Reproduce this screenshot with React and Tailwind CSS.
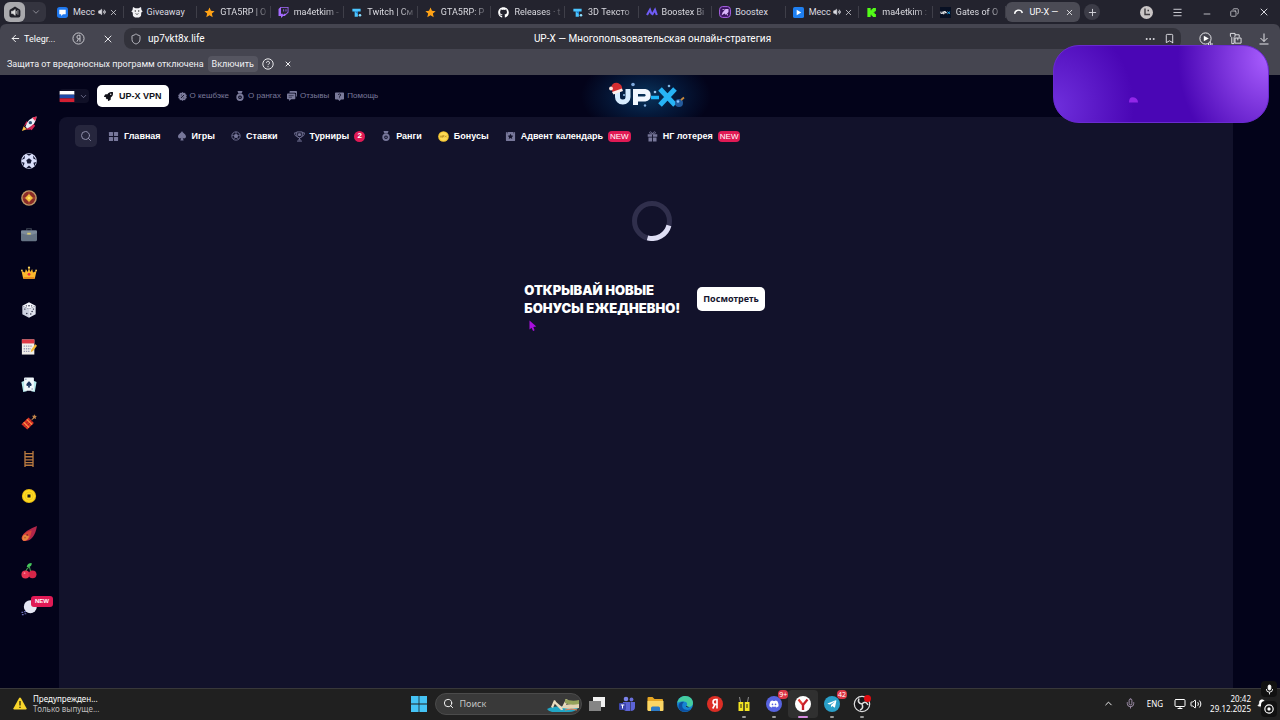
import React from 'react';
import { ArrowLeft, Bell, Bookmark, ChevronDown, ChevronUp, Copy, Menu, Mic, Minus, Monitor, MoreHorizontal, Plus, Search, Shield, Volume2, X } from 'lucide-react';
import { FaDiscord, FaGithub, FaRocket, FaTwitch, FaTelegramPlane } from 'react-icons/fa';

const StarIcon = () => (
  <svg viewBox="0 0 12 12" className="size-[11px]">
    <path d="M6 .5 7.6 4.2l4 .3-3 2.7.9 4L6 9.1l-3.5 2.1.9-4-3-2.7 4-.3z" fill="#ffa216" />
  </svg>
);

const TeletypeIcon = () => (
  <svg viewBox="0 0 12 12" className="size-[11px]">
    <path d="M1.500 2h9v3H7.500v5.500H4V5H1.500z" fill="#4cc5ff" />
    <path d="M4 5h3.500v3z" fill="#1879c9" />
    <circle cx="9.8" cy="9" r="1.4" fill="#8fe0ff" />
  </svg>
);

const ChatIcon = () => (
  <svg viewBox="0 0 12 12" className="size-[11px]">
    <rect width="12" height="12" rx="3" fill="#1f78ee" />
    <path d="M2.500 3h7v5H6.5L4.5 9.8V8h-2z" fill="#fff" />
  </svg>
);

const PlayIcon = () => (
  <svg viewBox="0 0 12 12" className="size-[11px]">
    <rect width="12" height="12" rx="2" fill="#1f80f2" />
    <path d="M4 3l5 3-5 3z" fill="#fff" />
  </svg>
);

const GiveawayIcon = () => (
  <svg viewBox="0 0 12 12" className="size-[12px]">
    <path d="M2 1l2.5 1.2h3L10 1l.5 3 1.2 1.5-1.4 1L10 10l-2 1.5H4L2 10l-.3-3.4L.3 5.5 1.5 4z" fill="#f1f1f4" />
    <circle cx="4.3" cy="5" r=".7" fill="#333" />
    <circle cx="7.7" cy="5" r=".7" fill="#333" />
    <path d="M4.5 7.5L6 8.5l1.5-1" stroke="#333" strokeWidth=".7" fill="none" />
  </svg>
);

const WaveIcon = () => (
  <svg viewBox="0 0 12 12" className="size-[12px]">
    <path d="M1 9L4 3.800 5.600 8M6 9L9 3.800 10.800 9" stroke="#6f5cf5" strokeWidth="2.100" fill="none" />
  </svg>
);

const BoostexIcon = () => (
  <svg viewBox="0 0 12 12" className="size-[12px]">
    <rect x=".6" y=".6" width="10.8" height="10.8" rx="3" fill="#3b1560" stroke="#ad63ea" />
    <path d="M2.500 9.500l1-3 3-3.500H9.500v3L7 9 5.500 7.500z" fill="#d9b5fa" />
    <path d="M3.500 3.500h2M8.500 8v1.500" stroke="#d9b5fa" strokeWidth=".8" />
  </svg>
);

const KickIcon = () => (
  <svg viewBox="0 0 12 12" className="size-[11px]">
    <path d="M1.500 1h3.600v2.500h1V2.200h1.200V1h3.500v3.500H9.500v1.300H8.300v.6h1.200v1.300h1.300V11H7.300V9.800H6.100V8.500h-1V11H1.500z" fill="#53fc18" />
  </svg>
);

const GatesIcon = () => (
  <svg viewBox="0 0 12 12" className="size-[11px]">
    <rect width="12" height="12" fill="#081023" />
    <path d="M1 5v2h2V5M4 8V5h2v1.5H4M6.5 6.2h1" stroke="#fff" fill="none" />
    <path d="M8 5l3 2.5M11 5L8 7.5" stroke="#23b2ff" />
  </svg>
);

const LoadingIcon = () => (
  <svg viewBox="0 0 12 12" className="size-[11px]">
    <path d="M1.800 7.500A4.300 4.300 0 0 1 10.200 6.500" stroke="#fff" strokeWidth="1.5" fill="none" />
  </svg>
);

const tabs = [
  { title: 'Месс', icon: <ChatIcon />, sound: true, close: true },
  { title: 'Giveaway', icon: <GiveawayIcon /> },
  { title: 'GTA5RP | О', icon: <StarIcon />, fade: true },
  { title: 'ma4etkim -', icon: <FaTwitch size={11} color="#a56bff" />, fade: true },
  { title: 'Twitch | См', icon: <TeletypeIcon />, fade: true },
  { title: 'GTA5RP: Р', icon: <StarIcon />, fade: true },
  { title: 'Releases · t', icon: <FaGithub size={11} color="#fff" />, fade: true },
  { title: '3D Тексто', icon: <TeletypeIcon />, fade: true },
  { title: 'Boostex Bi', icon: <WaveIcon />, fade: true },
  { title: 'Boostex', icon: <BoostexIcon /> },
  { title: 'Месс', icon: <PlayIcon />, sound: true, close: true },
  { title: 'ma4etkim :', icon: <KickIcon />, fade: true },
  { title: 'Gates of O', icon: <GatesIcon />, fade: true },
  { title: 'UP-X —', icon: <LoadingIcon />, close: true, active: true },
];

const Tab = ({ title, icon, sound, close, fade, active }) => (
  <div
    className={`flex h-5 min-w-0 items-center pl-[7px] ${close ? 'pr-[6px]' : 'pr-px'} ${
      active ? 'rounded-md bg-[#4b4b55] text-white' : 'bg-[linear-gradient(#3f3f49,#3f3f49)] bg-[length:1px_12px] bg-right bg-no-repeat text-[#dcdce2]'
    }`}
  >
    <span className="mr-1 w-3 shrink-0">{icon}</span>
    <span
      className={`grow whitespace-nowrap text-[9px] leading-4 ${
        fade ? '[mask-image:linear-gradient(to_right,black_65%,transparent)]' : ''
      }`}
    >
      {title}
    </span>
    {sound && <Volume2 size={8} fill="currentColor" className="mr-[3px] shrink-0" />}
    {close && (
      <button type="button" aria-label="Закрыть вкладку" className="shrink-0">
        <X size={9} />
      </button>
    )}
  </div>
);

const TabBar = () => (
  <div className="flex h-6 items-center bg-[#23232e] text-[#d8d8de]">
    <div className="ml-1 flex h-5 w-[42px] shrink-0 items-center rounded-md bg-[#34343f]">
      <button type="button" aria-label="Звук" className="flex h-5 w-[21px] items-center justify-center rounded-md bg-[#a9a9ad]">
        <svg viewBox="0 0 12 12" className="size-3">
          <path d="M2 3l4-2.4L10 3a2 2 0 0 1 1.4 2v4.5a2 2 0 0 1-2 2h-7a2 2 0 0 1-2-2V5A2 2 0 0 1 2 3z" fill="#202028" />
          <path d="M2.5 5.2H4l2.2-1.8v6L4 7.6H2.5zM7.4 5v2.8M8.9 4v4.8" fill="#ddd" stroke="#ddd" strokeWidth=".6" />
        </svg>
      </button>
      <button type="button" aria-label="Список вкладок" className="flex flex-1 justify-center">
        <ChevronDown size={10} className="text-[#9a9aa4]" />
      </button>
    </div>
    <div className="ml-1 grid min-w-0 flex-1 grid-cols-14">
      {tabs.map((tab, index) => (
        <Tab key={index} {...tab} />
      ))}
    </div>
    <div className="flex w-[200px] shrink-0 items-center pl-1">
      <button type="button" aria-label="Новая вкладка" className="flex size-4 items-center justify-center rounded-full bg-[#3c3c47]">
        <Plus size={11} />
      </button>
      <div className="flex flex-1 items-center justify-between pl-10 pr-[10px]">
        <button type="button" aria-label="Профиль" className="flex size-[13px] items-center justify-center rounded-full bg-[#c9c5c6]">
          <svg viewBox="0 0 12 12" className="size-3">
            <path d="M4 2.500v6h5M6.500 4.500h1.500" stroke="#3d3a3f" strokeWidth="1.4" fill="none" />
          </svg>
        </button>
        <button type="button" aria-label="Меню"><Menu size={11} /></button>
        <button type="button" aria-label="Свернуть" className="pt-1"><Minus size={10} /></button>
        <button type="button" aria-label="Окно"><Copy size={9} className="-scale-x-100" /></button>
        <button type="button" aria-label="Закрыть"><X size={12} /></button>
      </div>
    </div>
  </div>
);

const AddressBar = () => (
  <div className="bg-[#23232e]">
    <div className="flex h-[29px] items-start rounded-t-md bg-[#454550] pt-1 text-[#e6e6ea]">
      <div className="flex h-[21px] w-[124px] shrink-0 items-center pl-[10px]">
        <button type="button" className="flex items-center gap-[3px] text-[9px] leading-4 text-white">
          <ArrowLeft size={11} />
          Telegr...
        </button>
        <button type="button" aria-label="Яндекс" className="ml-[17px]">
          <svg viewBox="0 0 14 14" className="size-[13px]" fill="none" stroke="#d0d0d6">
            <circle cx="7" cy="7" r="6" />
            <path d="M8.6 10.5v-7H7.2a1.8 1.8 0 0 0 0 3.8h1.4M7 7.4l-1.7 3.1" />
          </svg>
        </button>
        <button type="button" aria-label="Остановить" className="ml-[17px]">
          <X size={12} />
        </button>
      </div>
      <div className="relative flex h-[21px] min-w-0 flex-1 items-center rounded-lg bg-[#32323b] px-[6px]">
        <Shield size={12} className="shrink-0 text-[#b8b8c0]" />
        <input
          aria-label="Адрес"
          defaultValue="up7vkt8x.life"
          className="ml-[6px] w-[100px] bg-transparent text-[10px] leading-4 text-white outline-none"
        />
        <div className="absolute inset-x-0 top-0 mx-auto w-fit text-[10px] leading-[21px] text-white">
          UP-X — Многопользовательская онлайн-стратегия
        </div>
        <button type="button" aria-label="Ещё" className="ml-auto">
          <MoreHorizontal size={12} />
        </button>
        <button type="button" aria-label="Закладка" className="ml-2">
          <Bookmark size={11} />
        </button>
      </div>
      <div className="flex h-[21px] w-[99px] shrink-0 items-center justify-between pl-[18px] pr-[10px]">
        <button type="button" aria-label="Видео">
          <svg viewBox="0 0 14 14" className="size-[14px]">
            <circle cx="6.5" cy="6.5" r="5.6" fill="none" stroke="#e6e6ea" />
            <path d="M4.8 3.7l5 2.8-5 2.8z" fill="#fff" />
            <path d="M9.5 13v-2M11.3 13v-3.4M13 13v-2" stroke="#e6e6ea" />
          </svg>
        </button>
        <button type="button" aria-label="Расширения">
          <svg viewBox="0 0 14 14" className="size-[13px]" fill="none" stroke="#e6e6ea">
            <path d="M1.500 1.500h5v3L5.500 6v6.500H3V6L1.500 4.500zM6.500 3H11v3M6.500 6.500H13V12H6.500zM9.500 6.500v2.500" />
          </svg>
        </button>
        <button type="button" aria-label="Загрузки">
          <svg viewBox="0 0 12 12" className="size-3" fill="none" stroke="#e6e6ea">
            <path d="M6 .5v8M2.500 5L6 8.500 9.500 5M1.500 11h9" />
          </svg>
        </button>
      </div>
    </div>
  </div>
);

const WarningBar = () => (
  <div className="flex h-[22px] items-center bg-[#454550] pl-[7px] text-[9px] leading-4 text-[#f0f0f3]">
    <span>Защита от вредоносных программ отключена</span>
    <button type="button" className="ml-1 h-4 rounded-sm bg-[#555560] px-1">Включить</button>
    <button type="button" aria-label="Справка" className="ml-1">
      <svg viewBox="0 0 12 12" className="size-3" fill="none" stroke="#e8e8ec">
        <circle cx="6" cy="6" r="5.2" />
        <path d="M4.5 4.8a1.5 1.5 0 1 1 2.2 1.3q-.7.3-.7 1M6 8.2v1" />
      </svg>
    </button>
    <button type="button" aria-label="Скрыть" className="ml-[10px]"><X size={8} strokeWidth={3} /></button>
  </div>
);

const GearIcon = () => (
  <svg viewBox="0 0 12 12" className="size-[9px]">
    <path d="M6 0l1.5 1.3 2-.3.6 1.9 1.7 1L11 6l.8 2-1.7 1-.6 2-2-.3L6 12l-1.5-1.3-2 .3L2 9 .2 8 1 6 .2 4 2 3l.5-2 2 .3z" fill="currentColor" />
    <path d="M4 8l4-4M4 4h.9M7.3 8h.9" stroke="#05051c" strokeWidth="1.1" />
  </svg>
);

const MedalIcon = () => (
  <svg viewBox="0 0 12 12" className="size-[10px]">
    <path d="M3 0h6L8 3H4z" fill="currentColor" />
    <circle cx="6" cy="7.5" r="3.3" stroke="currentColor" strokeWidth="2.2" fill="none" />
    <circle cx="6" cy="7.5" r="1" fill="currentColor" />
  </svg>
);

const ReviewsIcon = () => (
  <svg viewBox="0 0 12 12" className="size-[10px]">
    <path d="M4 0h7a1 1 0 0 1 1 1v5a1 1 0 0 1-1 1V3.500a1.500 1.500 0 0 0-1.500-1.500H3V1a1 1 0 0 1 1-1z" fill="currentColor" />
    <path d="M1 3h8a1 1 0 0 1 1 1v5a1 1 0 0 1-1 1H5l-2.500 2V10H1a1 1 0 0 1-1-1V4a1 1 0 0 1 1-1z" fill="currentColor" />
    <path d="M2 5.500h6M2 7.500h4" stroke="#25253f" strokeWidth=".8" />
  </svg>
);

const HelpIcon = () => (
  <svg viewBox="0 0 12 12" className="size-[9px]">
    <path d="M1 .5h10a1 1 0 0 1 1 1V9a1 1 0 0 1-1 1H8l-2 2-2-2H1a1 1 0 0 1-1-1V1.500a1 1 0 0 1 1-1z" fill="currentColor" />
    <path d="M4.500 4a1.500 1.500 0 1 1 1.500 1.500v.8M6 7.200v1" stroke="#05051c" fill="none" />
  </svg>
);

const headerLinks = [
  { label: 'О кешбэке', icon: <GearIcon /> },
  { label: 'О рангах', icon: <MedalIcon /> },
  { label: 'Отзывы', icon: <ReviewsIcon /> },
  { label: 'Помощь', icon: <HelpIcon /> },
];

const Logo = () => (
  <a href="#home" aria-label="UP-X" className="block">
    <svg viewBox="0 0 80 32" className="h-8 w-20">
      {/* letters are plain bars, hat and bauble sit on the corners */}
      <g fill="none" strokeWidth="5">
        <path d="M11.500 9.500v7.500a5 5 0 0 0 5 5h.5a5 5 0 0 0 5-5v-8" stroke="#d8edff" />
        <path d="M29.500 25V11.500H39a3.800 3.800 0 0 1 0 7.500h-8" stroke="#f1f7ff" />
        <path d="M45 17.500h8" stroke="#1cb4f8" strokeWidth="3.500" />
        <path d="M54 9L69 25M69 9L54 25" stroke="#27b4f6" strokeWidth="5" />
      </g>
      <path d="M5 8Q6 2 12 3q5 2 4 7L7 13z" fill="#d52e31" />
      <path d="M6 12l10-3.500 1 2.500L7.500 14.500z" fill="#fff0ec" />
      <circle cx="5" cy="8.500" r="1.900" fill="#ffe5df" />
      <circle cx="27" cy="4.500" r="1.800" fill="#7ea8db" />
      <circle cx="63" cy="6" r="1.300" fill="#7fb4e0" />
      <circle cx="49" cy="12" r="1.300" fill="#9cc6ed" />
      <circle cx="39" cy="25.500" r="1.200" fill="#81aede" />
      <circle cx="18" cy="15" r="1" fill="#9cc6ed" />
      <circle cx="73" cy="23" r="4" fill="#245b9c" />
      <circle cx="72" cy="21.500" r="1.300" fill="#8fc5ff" />
      <path d="M75 20l3-2.500" stroke="#c98a3d" strokeWidth="1.800" />
    </svg>
  </a>
);

const SiteHeader = () => (
  <header className="grid h-[42px] grid-cols-[1fr_auto_1fr] items-center bg-[radial-gradient(ellipse_65px_40px_at_50%_50%,#08345c,#051a3c_45%,#03031a)]">
    <div className="flex items-center">
      <button type="button" aria-label="Язык: русский" className="flex h-[14px] items-center gap-1 rounded-sm bg-[#101027] pr-px">
        <svg viewBox="0 0 16 12" className="h-[11px] w-4">
          <rect width="16" height="4" fill="#fff" />
          <rect y="4" width="16" height="4" fill="#1f4aa8" />
          <rect y="8" width="16" height="4" fill="#d31f32" />
        </svg>
        <ChevronDown size={9} className="text-[#8585a5]" />
      </button>
      <button type="button" className="ml-2 flex h-[22px] items-center gap-[6px] rounded-[5px] bg-white px-[7px] text-[9px] leading-4 font-bold text-[#111119]">
        <FaRocket size={9} />
        UP-X VPN
      </button>
      <nav className="ml-[9px] flex gap-[6px]">
        {headerLinks.map((link) => (
          <a key={link.label} href="#info" className="flex items-center gap-[3px] text-[8px] leading-4 whitespace-nowrap text-[#7a7a9a]">
            {link.icon}
            {link.label}
          </a>
        ))}
      </nav>
    </div>
    <Logo />
  </header>
);

const GridIcon = () => (
  <svg viewBox="0 0 12 12" className="size-[11px]" fill="currentColor">
    <rect x="1" y="1" width="4.500" height="4.500" rx=".7" />
    <rect x="6.500" y="1" width="4.500" height="4.500" rx=".7" />
    <rect x="1" y="6.500" width="4.500" height="4.500" rx=".7" />
    <rect x="6.500" y="6.500" width="4.500" height="4.500" rx=".7" />
  </svg>
);

const SpadeIcon = () => (
  <svg viewBox="0 0 12 12" className="size-[10px]" fill="currentColor">
    <path d="M6 0c1 2.500 4.800 4 4.800 6.600 0 2.200-2.700 2.900-4 1.600L8 11.500H4l1.200-3.300c-1.300 1.300-4 .6-4-1.600C1.200 4 5 2.500 6 0z" />
  </svg>
);

const BallIcon = () => (
  <svg viewBox="0 0 12 12" className="size-[10px]" fill="none" stroke="currentColor">
    <circle cx="6" cy="6" r="5" />
    <path d="M6 3.500l2.200 1.600-.8 2.600H4.600l-.8-2.600z" fill="currentColor" />
    <path d="M6 1v2M1.200 5l2 .3M10.800 5l-2 .3M3.200 10l1.200-2M8.800 10L7.600 8" />
  </svg>
);

const TrophyIcon = () => (
  <svg viewBox="0 0 12 12" className="size-[11px]" fill="none" stroke="currentColor">
    <path d="M3 1h6v3.500a3 3 0 0 1-6 0zM3 2H.7c0 2.600.8 3.600 2.500 3.700M9 2h2.300c0 2.600-.8 3.600-2.500 3.700M6 7.500v2M3.300 11h5.400M4.500 9.700h3" />
    <path d="M5 3h2v2H5z" fill="currentColor" />
  </svg>
);

const CoinIcon = () => (
  <svg viewBox="0 0 12 12" className="size-[11px]">
    <circle cx="6" cy="6" r="5.800" fill="#f4c531" />
    <circle cx="6" cy="6" r="4.600" fill="#ffda55" />
    <path d="M2.500 5v1.700h1.500V5M5 7.300V5h1.500v1.200H5M7.500 5l2 2M9.500 5l-2 2" stroke="#a37511" strokeWidth=".6" fill="none" />
  </svg>
);

const CalendarIcon = () => (
  <svg viewBox="0 0 12 12" className="size-[11px]">
    <rect x="1" y="1" width="10" height="10" rx="1" fill="currentColor" />
    <path d="M6 3l1 2 2 .3-1.500 1.400.4 2L6 7.700l-1.900 1 .4-2L3 5.300 5 5z" fill="#12122b" />
    <path d="M2 2h1M9 2h1" stroke="#12122b" />
  </svg>
);

const GiftIcon = () => (
  <svg viewBox="0 0 12 12" className="size-[11px]" fill="currentColor">
    <path d="M.8 3.500h4.700v2.700H.8zM6.500 3.500h4.700v2.700H6.500zM1.600 7h3.900v4.400H1.600zM6.500 7h3.900v4.400H6.500z" />
    <path d="M6 3.300C5 .4 2.600.3 2.800 2c.1.900 1.200 1.200 3.200 1.300C8 3.200 9.100 2.900 9.200 2 9.400.3 7 .4 6 3.300z" fill="none" stroke="currentColor" />
  </svg>
);

const navItems = [
  { label: 'Главная', icon: <GridIcon /> },
  { label: 'Игры', icon: <SpadeIcon /> },
  { label: 'Ставки', icon: <BallIcon /> },
  { label: 'Турниры', icon: <TrophyIcon />, count: 2 },
  { label: 'Ранги', icon: <MedalIcon /> },
  { label: 'Бонусы', icon: <CoinIcon /> },
  { label: 'Адвент календарь', icon: <CalendarIcon />, isNew: true },
  { label: 'НГ лотерея', icon: <GiftIcon />, isNew: true },
];

const MainNav = () => (
  <nav className="flex items-center px-4 pt-2">
    <button type="button" aria-label="Поиск" className="mr-[11px] flex size-[22px] items-center justify-center rounded-[5px] bg-[#26263d] text-[#8e8eaa]">
      <Search size={12} />
    </button>
    <div className="flex items-center gap-4">
      {navItems.map((item) => (
        <a key={item.label} href="#section" className="flex items-center gap-[5px] text-[9px] leading-4 font-bold whitespace-nowrap text-white">
          <span className="text-[#77779a]">{item.icon}</span>
          {item.label}
          {item.count && (
            <span className="flex size-[11px] items-center justify-center rounded-full bg-[#e01a55] text-[8px] leading-3">{item.count}</span>
          )}
          {item.isNew && <span className="rounded-sm bg-[#e01a55] px-[2px] text-[8px] leading-[11px] font-normal">NEW</span>}
        </a>
      ))}
    </div>
  </nav>
);

const games = [
  {
    name: 'Ракета',
    icon: (
      <>
        <path d="M1 17l2-5.500 3.500 3.500z" fill="#f8bb42" />
        <path d="M3 12l3-6 3 1zM10 15.500l1-4-3 1-3 2 2 1z" fill="#c3224c" />
        <path d="M5 12Q8 2 17.500.500 17 10 7 14z" fill="#e9edf5" />
        <path d="M12.500 2Q15 .7 17.500.500q-.2 2.500-1.500 5z" fill="#ee315a" />
        <path d="M9 14l5-5 2 2-4 5z" fill="#d82957" />
        <circle cx="10.500" cy="7.500" r="1.900" fill="#2b5678" />
      </>
    ),
  },
  {
    name: 'Футбол',
    icon: (
      <>
        <circle cx="9" cy="9" r="8.800" fill="#dadffb" />
        <path d="M9 6l3 2.200-1.200 3.500H7.200L6 8.200zM6 1.200L9 3.200l3-2zM.800 7.500L4 6.500l.5-3.800zM17.200 7.500L14 6.500l-.5-3.800zM3 15l1-4-3-1zM15 15l-1-4 3-1zM6 17L9 14.200l3 2.800z" fill="#171a35" />
      </>
    ),
  },
  {
    name: 'Рулетка',
    icon: (
      <>
        <circle cx="9" cy="9" r="8.800" fill="#c09a68" />
        <circle cx="9" cy="9" r="7.200" fill="#8a2b27" />
        <path d="M9 2.200V16M2.200 9H16" stroke="#b55b3e" strokeWidth=".8" />
        <path d="M9 4.500L13.500 9 9 13.500 4.500 9z" fill="#f1bd3d" />
        <circle cx="9" cy="9" r="1.500" fill="#ffe26b" />
      </>
    ),
  },
  {
    name: 'Кейсы',
    icon: (
      <>
        <path d="M6.500 4V2h5v2" stroke="#434b58" strokeWidth="1.200" fill="none" />
        <rect x="0" y="4" width="18" height="12" rx="1.300" fill="#667485" />
        <path d="M0 5a1 1 0 0 1 1-1h16a1 1 0 0 1 1 1v2l-7 2H7L0 7z" fill="#7d8b9b" />
        <rect x="7" y="6.500" width="4" height="2" fill="#d9cb71" />
      </>
    ),
  },
  {
    name: 'Корона',
    icon: (
      <>
        <path d="M.500 6.500l4 2L5.500 4.500 7.500 8l1.500-5L10.500 8l2-3.500 1 4 4-2L15.500 15.500h-13z" fill="#fbb82d" />
        <path d="M3 13.500h12v2H3z" fill="#e68a1c" />
        <circle cx="9" cy="10.500" r="1.600" fill="#e72d42" />
        <circle cx="1" cy="6" r="1" fill="#ffd65b" />
        <circle cx="17" cy="6" r="1" fill="#ffd65b" />
        <circle cx="9" cy="3" r="1.300" fill="#ffd65b" />
      </>
    ),
  },
  {
    name: 'Кости',
    icon: (
      <>
        <path d="M9 .3l7.500 4L9 8 1.500 4.300z" fill="#f3f4fb" />
        <path d="M1.500 4.300L9 8v9.700l-7.500-4z" fill="#cdd1df" />
        <path d="M16.500 4.300L9 8v9.700l7.500-4z" fill="#dfe2ed" />
        <g fill="#202338">
          <circle cx="9" cy="4.300" r=".9" />
          <circle cx="6" cy="4.300" r=".7" />
          <circle cx="12" cy="4.300" r=".7" />
          <circle cx="4.300" cy="8" r=".8" />
          <circle cx="6.500" cy="13" r=".8" />
          <circle cx="14" cy="8" r=".8" />
          <circle cx="11" cy="13.500" r=".8" />
          <circle cx="12.500" cy="10.700" r=".8" />
        </g>
      </>
    ),
  },
  {
    name: 'Лотерея',
    icon: (
      <>
        <rect x="1" y=".5" width="14" height="17" fill="#f1eee9" />
        <rect x="1" y=".5" width="14" height="4.500" fill="#df3844" />
        <path d="M3 8h10M3 11h8M3 14h7" stroke="#9a9ab4" strokeWidth="1.500" strokeDasharray="1.500 1" />
        <path d="M11 15l.5-3L16 6l2 1.500-4.500 6z" fill="#f3b833" />
      </>
    ),
  },
  {
    name: 'Карты',
    icon: (
      <>
        <path d="M.5 5.500l6-2.500v13l-4 1zM17.500 5.500l-6-2.500v13l4 1z" fill="#b4e8eb" />
        <rect x="3.500" y=".5" width="11" height="15" rx="1" fill="#f0f7fb" />
        <path d="M9 4.500c.7 1.700 3 2.500 3 4.200 0 1.500-1.700 1.700-2.400.9l.7 2.200H7.700l.7-2.200c-.7.8-2.400.6-2.400-.9 0-1.700 2.300-2.500 3-4.200z" fill="#1b335e" />
        <path d="M5 2.500h1M12 13.500h1" stroke="#1b335e" />
      </>
    ),
  },
  {
    name: 'Динамит',
    icon: (
      <>
        <path d="M.5 11.500L8.500 4l6 6-7.500 7.500z" fill="#dc3426" />
        <path d="M2.500 13.500l8-7.500M4.500 15.500l8-7.500" stroke="#8f171c" strokeWidth=".8" />
        <path d="M3 9.300l6 6M6.500 6l6 6" stroke="#ff9748" strokeWidth="1.300" />
        <path d="M12 6.500l3-3" stroke="#b08157" strokeWidth="1.200" />
        <path d="M15 .3l.9 1.700 2 .2-1.400 1.500.4 2-1.900-.9-1.700.8.4-2-1.300-1.500 1.900-.2z" fill="#c2854b" />
      </>
    ),
  },
  {
    name: 'Лестница',
    icon: (
      <path d="M4.500 0v18M13.500 0v18M5 3h8M5 6.500h8M5 10h8M5 13h8M5 16h8" stroke="#b97a40" strokeWidth="1.500" />
    ),
  },
  {
    name: 'Монета',
    icon: (
      <>
        <circle cx="9" cy="9" r="8" fill="#e9bc12" />
        <circle cx="9" cy="9" r="6.800" fill="#fedb23" />
        <path d="M7.300 7.300h3.400v3.400H7.300z" fill="#15151e" />
        <circle cx="9" cy="9" r="4.500" fill="none" stroke="#e6b81b" strokeWidth=".7" />
      </>
    ),
  },
  {
    name: 'Метеор',
    icon: (
      <>
        <path d="M18 0Q4 5 1 12q-1 4.500 3 5Q15 17 18 0z" fill="#b3264a" />
        <path d="M12 5Q3 7 1 12.500q-.7 4 3 4.500 6.500-.2 8-12z" fill="#d84437" />
        <path d="M3 10q5-1 6 2-2 5-6 4.500-3-2 0-6.500z" fill="#e7873d" />
        <circle cx="7" cy="10" r="1" fill="#812535" />
        <circle cx="4.500" cy="13" r="1" fill="#b85632" />
      </>
    ),
  },
  {
    name: 'Вишни',
    icon: (
      <>
        <path d="M5 11Q6 6 9.500 4.500 10 9 12.500 11" stroke="#439a4e" strokeWidth="1.200" fill="none" />
        <path d="M6.500 4.500Q7 0 12 0q.5 5-5.500 4.500z" fill="#46c85c" />
        <circle cx="5" cy="13" r="4.500" fill="#e73353" />
        <circle cx="13" cy="12.700" r="4.400" fill="#d72648" />
        <circle cx="4" cy="11.500" r="1" fill="#ff8198" />
      </>
    ),
  },
  {
    name: 'Шар',
    isNew: true,
    icon: (
      <>
        <circle cx="10.500" cy="7.500" r="7.300" fill="#e5e7f4" />
        <path d="M.5 14h2M3.500 13h2M1 16.500h2M4 15.500h2" stroke="#6d70b7" strokeWidth="1.300" />
      </>
    ),
  },
];

const Sidebar = () => (
  <aside className="w-[59px] shrink-0 pt-[30px] pr-px">
    <ul className="flex h-[522px] flex-col">
      {games.map((game) => (
        <li key={game.name} className="flex flex-1 items-center justify-center">
          <a href="#game" aria-label={game.name} className="relative">
            <svg viewBox="0 0 18 18" className="size-4">{game.icon}</svg>
            {game.isNew && (
              <span className="absolute -top-1 left-[10px] rounded-[3px] bg-[#e01a55] px-1 text-[6px] leading-[11px] font-bold text-white">NEW</span>
            )}
          </a>
        </li>
      ))}
    </ul>
  </aside>
);

const Spinner = () => (
  <svg viewBox="0 0 40 40" className="size-10" fill="none" strokeWidth="5">
    <circle cx="20" cy="20" r="17.500" stroke="#302f4c" />
    <path d="M36.900 24.500A17.500 17.500 0 0 1 15.500 36.900" stroke="#dedef4" />
  </svg>
);

const SitePage = () => (
  <div className="flex flex-1 bg-[#03031a] font-['Liberation_Sans',sans-serif]">
    <Sidebar />
    <div className="flex min-w-0 flex-1 flex-col">
      <SiteHeader />
      <main className="relative flex-1 rounded-tl-lg bg-[#12122b]">
        <MainNav />
        <div className="flex justify-center pt-[54px] pl-3">
          <Spinner />
        </div>
        <section className="mt-10 flex items-center justify-center gap-[17px] pr-[3px]">
          <h2 className="font-['Inter',sans-serif] text-[13px] leading-[18px] font-black text-white">
            ОТКРЫВАЙ НОВЫЕ
            <br />
            БОНУСЫ ЕЖЕДНЕВНО!
          </h2>
          <button type="button" className="h-6 rounded-[5px] bg-white px-[6px] font-['Noto_Sans',sans-serif] text-[9px] leading-4 font-bold text-[#15152e]">
            Посмотреть
          </button>
        </section>
        <svg viewBox="0 0 8 12" className="absolute left-[470px] top-[203px] h-3 w-2">
          <path d="M.5.500v9l2-1.800 1.600 3.300 1.500-.8L4.300 7l3-.6z" fill="#a90ee0" />
        </svg>
      </main>
    </div>
    <div className="w-[47px] shrink-0" />
  </div>
);

const TaskApp = ({ label, children, running, active, badge }) => (
  <button type="button" aria-label={label} className={`relative flex h-7 items-center justify-center rounded-sm ${active ? 'bg-[#303030]' : ''}`}>
    {children}
    {badge && (
      <span className="absolute top-0 right-0 rounded-sm bg-[#dc3545] px-[1px] text-[7px] leading-[9px] text-white">{badge}</span>
    )}
    {running && <span className={`absolute bottom-0 h-[2px] rounded-full ${active ? 'w-[10px] bg-[#d68be0]' : 'w-1 bg-[#9a9a9a]'}`} />}
  </button>
);

const Taskbar = () => (
  <footer className="grid h-8 shrink-0 grid-cols-[1fr_auto_1fr] items-center border-t border-[#38383a] bg-[#202020] pb-[2px] font-['Noto_Sans',sans-serif] text-white">
    <div className="flex items-center gap-[6px] pl-[13px]">
      <svg viewBox="0 0 14 13" className="h-[13px] w-[14px]">
        <path d="M7 .5q.6 0 .9.500l5.600 10.300q.4 1.200-.8 1.200H1.300q-1.200 0-.8-1.200L6.100 1q.3-.5.900-.5z" fill="#f8d52b" />
        <path d="M7 4v4.500M7 9.700V11" stroke="#3d3410" strokeWidth="1.400" />
      </svg>
      <div className="text-[8px] leading-[10px]">
        <div>Предупрежден...</div>
        <div className="text-[#bdbdbd]">Только выпуще...</div>
      </div>
    </div>

    <div className="flex items-center gap-[1px]">
      <button type="button" aria-label="Пуск" className="flex w-[30px] justify-center">
        <svg viewBox="0 0 16 16" className="size-4" fill="#45c3f5">
          <path d="M0 0h7.600v7.600H0zM8.400 0H16v7.600H8.400zM0 8.400h7.600V16H0zM8.400 8.400H16V16H8.400z" />
        </svg>
      </button>
      <label className="flex h-[22px] w-[147px] items-center overflow-hidden rounded-full border border-[#4b4b4b] bg-[#393939] pl-[7px]">
        <Search size={11} className="shrink-0" />
        <input type="text" placeholder="Поиск" aria-label="Поиск в Windows" className="ml-[6px] w-full min-w-0 bg-transparent text-[9px] leading-4 outline-none placeholder:text-[#c4c4c4]" />
        <svg viewBox="0 0 34 18" className="h-[18px] w-[34px] shrink-0">
          <path d="M0 14Q9 9 31 13q-3 4-9 4H5q-4-1-5-3z" fill="#21a6c5" />
          <path d="M4 12L7 5l2 1-3 7zM8 6l7 6 1 3-2 0-6-6zM15 12l4-8 2 1-3 8z" fill="#eadcc0" />
          <path d="M15 12q6-4 17-3v4l-9 1-8-1z" fill="#e1d3b4" />
          <path d="M18 4q7 3 14 1v4q-8 2-14-1z" fill="#94a25b" />
          <path d="M18 15l6-1 6 1" stroke="#e8784f" fill="none" />
        </svg>
      </label>
      <div className="grid w-[294px] grid-cols-10">
        <TaskApp label="Представление задач">
          <svg viewBox="0 0 16 16" className="size-4">
            <rect x="4" y="1" width="12" height="10" fill="#f1f1f1" />
            <rect y="5" width="12" height="10" fill="#858585" />
          </svg>
        </TaskApp>
        <TaskApp label="Teams">
          <svg viewBox="0 0 16 16" className="size-4">
            <circle cx="7" cy="3" r="2.300" fill="#7b83eb" />
            <circle cx="12.500" cy="3.500" r="1.900" fill="#6a70db" />
            <path d="M4 6h7v9H7q-3-1-3-4zM11.500 6H16v5q0 4-4.500 4z" fill="#5c63d6" />
            <rect y="7" width="7" height="7" rx="1" fill="#3c44ad" />
            <path d="M1.800 9h3.500M3.500 9v3.500" stroke="#fff" />
          </svg>
        </TaskApp>
        <TaskApp label="Проводник">
          <svg viewBox="0 0 17 16" className="h-4 w-[17px]">
            <path d="M.5 2q0-1 1-1h4l2 2H15q1 0 1 1v10H.5z" fill="#e6a623" />
            <path d="M.5 5H16.500v9q0 1-1 1h-14q-1 0-1-1z" fill="#fbd665" />
            <path d="M4 15v-3q0-1.500 1.500-1.500h6Q13 10.500 13 12v3z" fill="#2d7bc6" />
          </svg>
        </TaskApp>
        <TaskApp label="Edge">
          <svg viewBox="0 0 16 16" className="size-4">
            <circle cx="8" cy="8" r="8" fill="#1684d2" />
            <path d="M.3 7C1 2.500 4.500 0 8.300 0 13 0 16 3.300 16 7c0 2.700-2 4-4 4-1.600 0-2.500-.6-2.300-1.200 1-1.400.5-4.300-2.700-4.300C4 5.500 1.500 5.500.3 7z" fill="#45cda0" />
            <path d="M7 6c-3 2-2.500 8 3.500 8q2.500 0 4-2C12.500 16 4.500 17.500 2 12.500 0 8 4 5 7 6z" fill="#0c4fa1" />
            <path d="M9.600 9.800q1 1.300 2.900 1.200-2 1-3.600-.4z" fill="#202020" />
          </svg>
        </TaskApp>
        <TaskApp label="Яндекс">
          <svg viewBox="0 0 16 16" className="size-4">
            <circle cx="8" cy="8" r="8" fill="#dc2e25" />
            <path d="M10 12.500v-9H8.500a2.400 2.400 0 0 0 0 4.900H10M8 8.400L5.700 12.500" stroke="#fff" strokeWidth="1.600" fill="none" />
          </svg>
        </TaskApp>
        <TaskApp label="Zapret" running>
          <svg viewBox="0 0 16 16" className="size-4">
            <path d="M4.500 6L3.500 1M11.500 6l1-5" stroke="#8c8c8c" />
            <path d="M2.500 6h4.800v9H2.500zM8.700 6h4.800v9H8.700z" fill="#f4e522" />
            <path d="M5 8v4M11 8v4" stroke="#272315" />
          </svg>
        </TaskApp>
        <TaskApp label="Discord" running badge="9+">
          <span className="flex size-4 items-center justify-center rounded-full bg-[#5763e0]">
            <FaDiscord size={10} />
          </span>
        </TaskApp>
        <TaskApp label="Яндекс Браузер" running active>
          <svg viewBox="0 0 16 16" className="size-4">
            <circle cx="8" cy="8" r="8" fill="#fff" />
            <path d="M3.500 3.500L8 9v5" stroke="#e83b32" strokeWidth="2.200" fill="none" />
            <path d="M12.500 3.500L8 9v5" stroke="#c71f2b" strokeWidth="2.200" fill="none" />
          </svg>
        </TaskApp>
        <TaskApp label="Telegram" running badge="42">
          <span className="flex size-4 items-center justify-center rounded-full bg-[#2a9fc8]">
            <FaTelegramPlane size={10} />
          </span>
        </TaskApp>
        <TaskApp label="OBS" running>
          <svg viewBox="0 0 18 18" className="size-[18px]">
            <circle cx="9" cy="9" r="7.700" fill="#17171a" stroke="#ddd" strokeWidth="1.200" />
            <path d="M9 9Q4 8 6 3.500M9 9q2 4.500-2 6M9 9q3.500-4 6 1" stroke="#ddd" strokeWidth="1.600" fill="none" />
            <circle cx="14.500" cy="3.500" r="3.500" fill="#e00b10" />
          </svg>
        </TaskApp>
      </div>
    </div>

    <div className="flex items-center justify-end pr-[13px] text-[8px] leading-[10px]">
      <button type="button" aria-label="Скрытые значки"><ChevronUp size={11} /></button>
      <Mic size={11} className="ml-[11px] text-[#a997b5]" />
      <span className="ml-[11px]">ENG</span>
      <Monitor size={12} className="ml-[11px]" />
      <Volume2 size={12} className="ml-1" />
      <div className="ml-2 text-right">
        <div>20:42</div>
        <div>29.12.2025</div>
      </div>
      <Bell size={10} fill="currentColor" className="ml-[6px]" />
    </div>
  </footer>
);

// Floating plate of the screen recorder
const FloatingPlate = () => (
  <div className="absolute top-[45px] right-[11px] h-[78px] w-[216px] rounded-[26px] border border-[#6a2bd0] bg-[radial-gradient(ellipse_90px_110px_at_100%_15%,#a95eff,#4a06b500),radial-gradient(ellipse_80px_90px_at_0%_80%,#6f2fdc,#4a06b500)] bg-[#4a06b5]">
    <svg viewBox="0 0 9 6" className="absolute top-[51px] left-[75px] h-[6px] w-[9px]">
      <path d="M0 5.500Q0 0 4 .3 9 1 9 5.500z" fill="#9226e8" />
    </svg>
  </div>
);

const RecorderBadges = () => (
  <div className="absolute right-[3px] bottom-[3px] flex flex-col gap-1">
    <span className="flex size-4 items-center justify-center rounded-sm bg-[#111111]">
      <svg viewBox="0 0 10 12" className="h-[11px] w-[9px]" fill="none" stroke="#fff">
        <rect x="3.500" y="1" width="3" height="5.500" rx="1.500" fill="#fff" />
        <path d="M1.500 5.500a3.500 3.500 0 0 0 7 0M5 9v2.500" />
      </svg>
    </span>
    <span className="flex size-4 items-center justify-center rounded-sm bg-[#111111]">
      <svg viewBox="0 0 12 12" className="size-[10px]">
        <circle cx="6" cy="6" r="5" fill="none" stroke="#fff" strokeWidth="1.400" />
        <circle cx="6" cy="6" r="2" fill="#fff" />
      </svg>
    </span>
  </div>
);

const App = () => (
  <div className="relative flex min-h-screen flex-col bg-[#03031a] font-['Roboto',sans-serif]">
    <TabBar />
    <AddressBar />
    <WarningBar />
    <SitePage />
    <Taskbar />
    <FloatingPlate />
    <RecorderBadges />
  </div>
);

export default App;
